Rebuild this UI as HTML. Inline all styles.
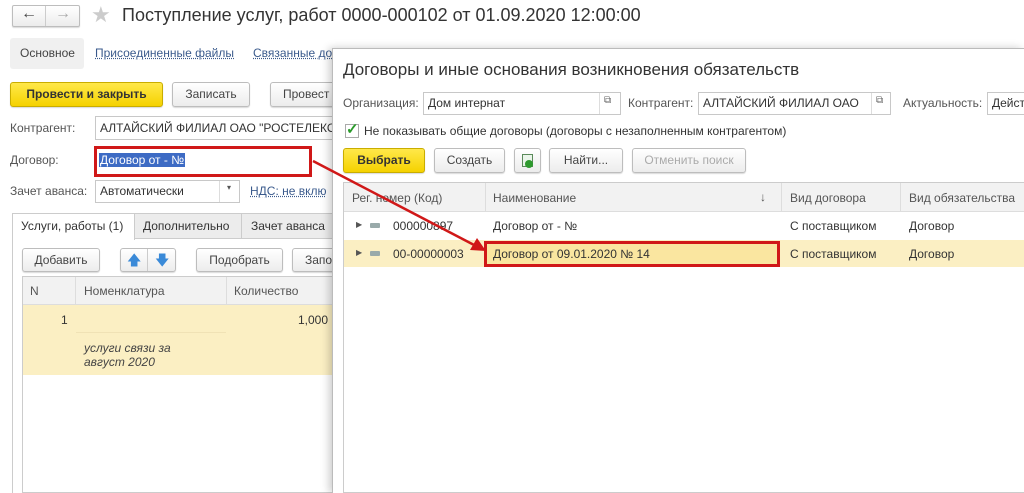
<!DOCTYPE html>
<html><head><meta charset="utf-8"><style>
*{box-sizing:border-box;margin:0;padding:0}
body{width:1024px;height:493px;overflow:hidden;background:#fff;font-family:"Liberation Sans",sans-serif;font-size:12px;color:#333;position:relative}
.a{position:absolute;white-space:nowrap}
.btn{position:absolute;border:1px solid #bdbdbd;border-radius:3px;background:linear-gradient(#fff,#ececec);box-shadow:0 1px 1px rgba(0,0,0,.15);text-align:center;color:#444}
.yel{background:linear-gradient(#ffe84a,#f5d200);border-color:#c9ad00;font-weight:bold;color:#333}
.inp{position:absolute;border:1px solid #c8c8c8;background:#fff;padding-left:4px;color:#333}
.lnk{color:#3a5a8c;text-decoration:underline;text-decoration-style:dotted}
.lbl{color:#555}
.cell{position:absolute;border-right:1px solid #ddd;padding-left:7px}
</style></head><body>
<!-- top nav -->
<div class="btn" style="left:12px;top:5px;width:68px;height:22px;border-radius:2px"></div>
<div class="a" style="left:45px;top:6px;width:1px;height:20px;background:#ccc"></div>
<div class="a" style="left:21px;top:5px;font-size:16px;color:#444">&#8592;</div>
<div class="a" style="left:55px;top:5px;font-size:16px;color:#aaa">&#8594;</div>
<div class="a" style="left:91px;top:2px;font-size:22px;color:#ccc">&#9733;</div>
<div class="a" style="left:122px;top:5px;font-size:18px;color:#333">Поступление услуг, работ 0000-000102 от 01.09.2020 12:00:00</div>
<!-- tabs -->
<div class="a" style="left:10px;top:38px;width:74px;height:31px;background:#f0f0f0;border-radius:3px"></div>
<div class="a" style="left:20px;top:46px;color:#444">Основное</div>
<div class="a lnk" style="left:95px;top:46px">Присоединенные файлы</div>
<div class="a lnk" style="left:253px;top:46px">Связанные до</div>
<!-- buttons -->
<div class="btn yel" style="left:10px;top:82px;width:153px;height:25px;line-height:23px">Провести и закрыть</div>
<div class="btn" style="left:172px;top:82px;width:78px;height:25px;line-height:23px">Записать</div>
<div class="btn" style="left:270px;top:82px;width:80px;height:25px;line-height:23px;text-align:left;padding-left:12px">Провест</div>
<div class="a lbl" style="left:10px;top:121px">Контрагент:</div>
<div class="inp" style="left:95px;top:116px;width:260px;height:24px;line-height:22px">АЛТАЙСКИЙ ФИЛИАЛ ОАО "РОСТЕЛЕКОМ"</div>
<div class="a lbl" style="left:10px;top:153px">Договор:</div>
<div class="a" style="left:94px;top:146px;width:218px;height:31px;border:3px solid #d01818;background:#fff"></div>
<div class="a" style="left:99px;top:153px;background:#3d6bc4;color:#fff;padding:0 1px">Договор от - №</div>
<div class="a lbl" style="left:10px;top:184px">Зачет аванса:</div>
<div class="inp" style="left:95px;top:180px;width:145px;height:23px;line-height:21px">Автоматически</div>
<div class="a" style="left:219px;top:181px;width:1px;height:21px;background:#ddd"></div>
<div class="a" style="left:227px;top:183px;font-size:8px;color:#555">&#9662;</div>
<div class="a lnk" style="left:250px;top:184px">НДС: не вклю</div>
<!-- lower tabs -->
<div class="a" style="left:12px;top:213px;width:340px;height:26px;background:#ececec;border:1px solid #ccc"></div>
<div class="a" style="left:12px;top:213px;width:123px;height:27px;background:#fff;border:1px solid #ccc;border-bottom:none"></div>
<div class="a" style="left:21px;top:219px">Услуги, работы (1)</div>
<div class="a" style="left:241px;top:214px;width:1px;height:25px;background:#ccc"></div>
<div class="a" style="left:143px;top:219px">Дополнительно</div>
<div class="a" style="left:251px;top:219px">Зачет аванса</div>
<div class="a" style="left:12px;top:239px;width:1px;height:254px;background:#ccc"></div>
<div class="btn" style="left:22px;top:248px;width:78px;height:24px;line-height:22px">Добавить</div>
<div class="btn" style="left:120px;top:248px;width:56px;height:24px"></div>
<div class="a" style="left:147px;top:249px;width:1px;height:22px;background:#ccc"></div>
<div class="a" style="left:127px;top:250px;color:#3a8ad8;font-size:14px">&#129093;</div>
<div class="a" style="left:155px;top:250px;color:#3a8ad8;font-size:14px">&#129095;</div>
<div class="btn" style="left:196px;top:248px;width:87px;height:24px;line-height:22px">Подобрать</div>
<div class="btn" style="left:292px;top:248px;width:60px;height:24px;line-height:22px;text-align:left;padding-left:12px">Запо</div>
<div class="a" style="left:22px;top:276px;width:320px;height:217px;border:1px solid #ccc"></div>
<div class="a" style="left:23px;top:277px;width:310px;height:28px;background:#f2f2f2;border-bottom:1px solid #ddd"></div>
<div class="a" style="left:75px;top:277px;width:1px;height:98px;background:#ddd"></div>
<div class="a" style="left:226px;top:277px;width:1px;height:98px;background:#ddd"></div>
<div class="a" style="left:30px;top:284px;color:#555">N</div>
<div class="a" style="left:84px;top:284px;color:#555">Номенклатура</div>
<div class="a" style="left:234px;top:284px;color:#555">Количество</div>
<div class="a" style="left:23px;top:305px;width:310px;height:70px;background:#fbefc3"></div>
<div class="a" style="left:76px;top:332px;width:150px;height:1px;background:#f0e2b5"></div>
<div class="a" style="left:61px;top:313px">1</div>
<div class="a" style="left:298px;top:313px">1,000</div>
<div class="a" style="left:84px;top:341px;font-style:italic;line-height:14px;color:#444">услуги связи за<br>август 2020</div>
<!-- dialog -->
<div class="a" style="left:332px;top:48px;width:692px;height:445px;background:#fff;border-left:1px solid #bbb;border-top:1px solid #bbb;box-shadow:-3px 0 8px rgba(0,0,0,.2)"></div>
<div class="a" style="left:343px;top:60px;font-size:17px;color:#333">Договоры и иные основания возникновения обязательств</div>
<div class="a lbl" style="left:343px;top:96px">Организация:</div>
<div class="inp" style="left:423px;top:92px;width:198px;height:23px;line-height:21px">Дом интернат</div>
<div class="a" style="left:599px;top:93px;width:1px;height:21px;background:#ddd"></div>
<div class="a" style="left:604px;top:95px;font-size:10px;color:#666">&#10697;</div>
<div class="a lbl" style="left:628px;top:96px">Контрагент:</div>
<div class="inp" style="left:698px;top:92px;width:193px;height:23px;line-height:21px">АЛТАЙСКИЙ ФИЛИАЛ ОАО</div>
<div class="a" style="left:871px;top:93px;width:1px;height:21px;background:#ddd"></div>
<div class="a" style="left:876px;top:95px;font-size:10px;color:#666">&#10697;</div>
<div class="a lbl" style="left:903px;top:96px">Актуальность:</div>
<div class="inp" style="left:987px;top:92px;width:40px;height:23px;line-height:21px">Дейст</div>
<div class="a" style="left:345px;top:124px;width:14px;height:14px;border:1px solid #aaa;background:#fff"></div>
<div class="a" style="left:346px;top:120px;color:#2a9a2a;font-size:15px;font-weight:bold">&#10003;</div>
<div class="a" style="left:364px;top:124px">Не показывать общие договоры (договоры с незаполненным контрагентом)</div>
<div class="btn yel" style="left:343px;top:148px;width:82px;height:25px;line-height:23px">Выбрать</div>
<div class="btn" style="left:434px;top:148px;width:71px;height:25px;line-height:23px">Создать</div>
<div class="btn" style="left:514px;top:148px;width:27px;height:25px"></div>
<div class="a" style="left:522px;top:154px;width:11px;height:13px;border:1px solid #5a8a5a;background:#eaf5ea"></div>
<div class="a" style="left:525px;top:160px;width:8px;height:8px;border-radius:50%;background:#2e9a2e"></div>
<div class="btn" style="left:549px;top:148px;width:74px;height:25px;line-height:23px">Найти...</div>
<div class="btn" style="left:632px;top:148px;width:114px;height:25px;line-height:23px;color:#aaa">Отменить поиск</div>
<div class="a" style="left:343px;top:182px;width:690px;height:311px;border:1px solid #ccc"></div>
<div class="a" style="left:344px;top:183px;width:690px;height:29px;background:#f2f2f2;border-bottom:1px solid #ddd"></div>
<div class="a" style="left:485px;top:183px;width:1px;height:29px;background:#ddd"></div>
<div class="a" style="left:781px;top:183px;width:1px;height:29px;background:#ddd"></div>
<div class="a" style="left:900px;top:183px;width:1px;height:29px;background:#ddd"></div>
<div class="a" style="left:352px;top:191px;color:#555">Рег. номер (Код)</div>
<div class="a" style="left:493px;top:191px;color:#555">Наименование</div>
<div class="a" style="left:760px;top:190px;color:#555">&#8595;</div>
<div class="a" style="left:790px;top:191px;color:#555">Вид договора</div>
<div class="a" style="left:909px;top:191px;color:#555">Вид обязательства</div>
<div class="a" style="left:344px;top:240px;width:680px;height:27px;background:#fbefc3"></div>
<div class="a" style="left:356px;top:220px;font-size:8px;color:#555">&#9654;</div>
<div class="a" style="left:370px;top:223px;width:10px;height:5px;background:#9aa;border-radius:1px"></div>
<div class="a" style="left:393px;top:219px">000000897</div>
<div class="a" style="left:493px;top:219px">Договор от - №</div>
<div class="a" style="left:790px;top:219px">С поставщиком</div>
<div class="a" style="left:909px;top:219px">Договор</div>
<div class="a" style="left:356px;top:248px;font-size:8px;color:#555">&#9654;</div>
<div class="a" style="left:370px;top:251px;width:10px;height:5px;background:#9aa;border-radius:1px"></div>
<div class="a" style="left:393px;top:247px">00-00000003</div>
<div class="a" style="left:484px;top:241px;width:296px;height:26px;border:3px solid #d01818;background:#fae6a0"></div>
<div class="a" style="left:493px;top:247px">Договор от 09.01.2020 № 14</div>
<div class="a" style="left:790px;top:247px">С поставщиком</div>
<div class="a" style="left:909px;top:247px">Договор</div>
<svg class="a" style="left:0;top:0" width="1024" height="493"><line x1="313" y1="161" x2="476" y2="246" stroke="#d01818" stroke-width="2.5"/><polygon points="486,251 470,250 477,238" fill="#d01818"/></svg>
</body></html>
